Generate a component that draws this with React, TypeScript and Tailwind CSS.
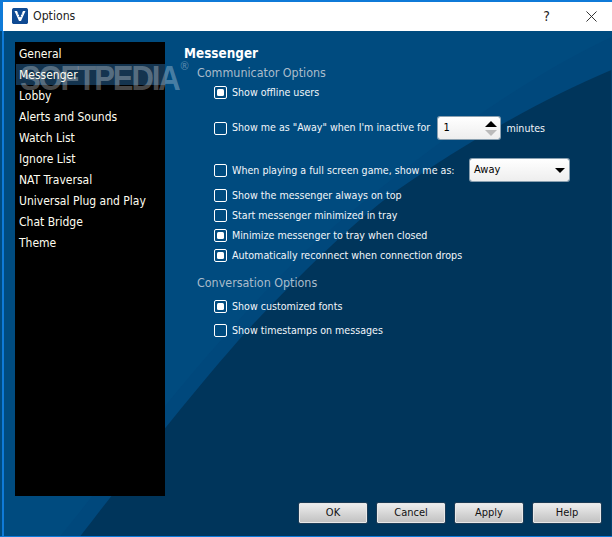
import React from "react";

const nav = ["General", "Messenger", "Lobby", "Alerts and Sounds", "Watch List", "Ignore List", "NAT Traversal", "Universal Plug and Play", "Chat Bridge", "Theme"];

function Check({ on, label, className = "" }: { on?: boolean; label: string; className?: string }) {
  return (
    <div className={`flex h-5 items-center ${className}`}>
      <Box on={on} />
      <span className="ml-[5px] pt-[1px] text-[10.600px] whitespace-nowrap text-[#f2f6fa]">{label}</span>
    </div>
  );
}

function Box({ on }: { on?: boolean }) {
  return (
    <span className="flex h-[13px] w-[13px] shrink-0 items-center justify-center rounded-[2px] border border-white">
      {on && <span className="h-[7px] w-[7px] rounded-[1.5px] bg-white" />}
    </span>
  );
}

function Btn({ label }: { label: string }) {
  return (
    <button className="h-5 w-[68px] rounded-[1px] border border-[#e8e8e8] bg-gradient-to-b from-[#ededed] to-[#c2c2c2] text-[11px] text-[#111] shadow-[0_0_0_1px_#1c3b55]">
      {label}
    </button>
  );
}

export default function App() {
  return (
    <div className="relative flex h-[537px] w-[612px] flex-col overflow-hidden bg-[#004b7f] font-['DejaVu_Sans_Condensed','DejaVu_Sans',sans-serif]">
      <div className="flex h-[31px] shrink-0 items-center border-t-2 border-l-[3px] border-[#0f7ad8] bg-white pb-[1px]">
        <svg viewBox="0 0 16 16" className="ml-[9px] h-4 w-4 rounded-[1px]">
          <rect width="16" height="16" rx="1.500" fill="#0f4a93" />
          <path d="M2.500 3h2.500l3 6.500 3-6.500h2.500l-4.500 10h-2z" fill="#fff" />
          <path d="M5.500 6h5M6.500 8.500h3" stroke="#0f4a93" strokeWidth="0.7" />
        </svg>
        <span className="ml-[5px] text-[12.200px] text-[#222]">Options</span>
        <span className="ml-auto text-[14px] text-[#222]">?</span>
        <svg viewBox="0 0 12 12" className="mr-[15px] ml-[36px] h-[11px] w-[11px]">
          <path d="M0.500 0.500l11 11M11.500 0.500l-11 11" stroke="#222" strokeWidth="1" fill="none" />
        </svg>
      </div>

      <div className="relative flex flex-1">
        <svg viewBox="0 31 612 506" className="absolute inset-0 h-full w-full">
          <path d="M60 537 C 130 450 230 320 315 243 C 400 170 510 85 612 37 V537Z" fill="#00487c" />
          <path d="M80 537 C 120 485 190 395 248 330 C 300 275 350 225 398 190 C 460 147 540 100 612 70 V537Z" fill="#00355b" />
        </svg>
        <div className="absolute top-0 bottom-0 left-[2px] w-[2px] bg-[#0f7ad8]" />

        <nav className="relative mt-[11px] ml-[15px] flex h-[454px] w-[150px] flex-col bg-black pt-[1px]">
          {nav.map((n) => (
            <div key={n} className={`flex h-[21px] items-center pl-1 text-[12px] text-[#fffdf0] ${n === "Messenger" ? "ml-[1px] bg-[#14344f] pl-[3px]" : ""}`}>
              {n}
            </div>
          ))}
        </nav>

        <div className="relative flex flex-1 flex-col pt-[13px] pr-[11px] pb-[13px] pl-[19px]">
          <h1 className="flex h-5 items-center text-[13.400px] leading-none font-bold text-white">Messenger</h1>
          <h2 className="ml-[13px] flex h-[18px] items-center text-[12.400px] text-[#aabccb]">Communicator Options</h2>
          <div className="ml-[30px] flex flex-col">
            <Check on label="Show offline users" />
            <div className="mt-[15px] flex h-[22px] items-center">
              <Box />
              <span className="ml-[5px] text-[10.600px] whitespace-nowrap text-[#f2f6fa]">Show me as "Away" when I'm inactive for</span>
              <div className="ml-auto flex h-[22px] w-[62px] shrink-0 items-center justify-between rounded-[2px] bg-gradient-to-b from-white to-[#eeeeee] pr-[3px] pl-[5px] text-[11px] text-black shadow-[0_0_0_1px_#8aa0b0]">
                <span>1</span>
                <span className="flex flex-col gap-[3px]">
                  <svg viewBox="0 0 12 6" className="h-[6px] w-3"><path d="M0 6L6 0l6 6z" fill="#000" /></svg>
                  <svg viewBox="0 0 12 6" className="h-[6px] w-3"><path d="M0 0h12L6 6z" fill="#bbb" /></svg>
                </span>
              </div>
              <span className="mr-[56px] ml-[6px] shrink-0 pt-[2px] text-[10.600px] text-[#f2f6fa]">minutes</span>
            </div>
            <div className="mt-5 flex h-[22px] items-center">
              <Box />
              <span className="ml-[5px] pt-[1px] text-[10.600px] whitespace-nowrap text-[#f2f6fa]">When playing a full screen game, show me as:</span>
              <div className="mr-[32px] ml-auto flex h-[22px] w-[99px] shrink-0 items-center justify-between rounded-[2px] bg-gradient-to-b from-white to-[#eeeeee] pr-[4px] pl-1 text-[11px] text-black shadow-[0_0_0_1px_#8aa0b0]">
                <span>Away</span>
                <svg viewBox="0 0 10 5" className="h-[5px] w-[10px]"><path d="M0 0h10L5 5z" fill="#000" /></svg>
              </div>
            </div>
            <Check label="Show the messenger always on top" className="mt-1" />
            <Check label="Start messenger minimized in tray" />
            <Check on label="Minimize messenger to tray when closed" />
            <Check on label="Automatically reconnect when connection drops" />
          </div>
          <h2 className="mt-[9px] ml-[13px] flex h-[18px] items-center text-[12.400px] text-[#aabccb]">Conversation Options</h2>
          <div className="ml-[30px] flex flex-col gap-1 pt-1">
            <Check on label="Show customized fonts" />
            <Check label="Show timestamps on messages" />
          </div>
          <div className="mt-auto flex justify-end gap-[10px]">
            <Btn label="OK" />
            <Btn label="Cancel" />
            <Btn label="Apply" />
            <Btn label="Help" />
          </div>
        </div>
      </div>
      <div className="h-[1px] shrink-0 bg-[#0f7ad8]" />

      <div className="pointer-events-none absolute top-[60px] left-[20px] flex origin-top scale-y-[1.15] items-start font-['Liberation_Sans',sans-serif] text-[31px] leading-[31px] font-bold tracking-[-2.100px] text-white/30">
        SOFTPEDIA<span className="mt-0 ml-[2px] text-[11px] leading-[11px] tracking-normal">®</span>
      </div>
    </div>
  );
}
